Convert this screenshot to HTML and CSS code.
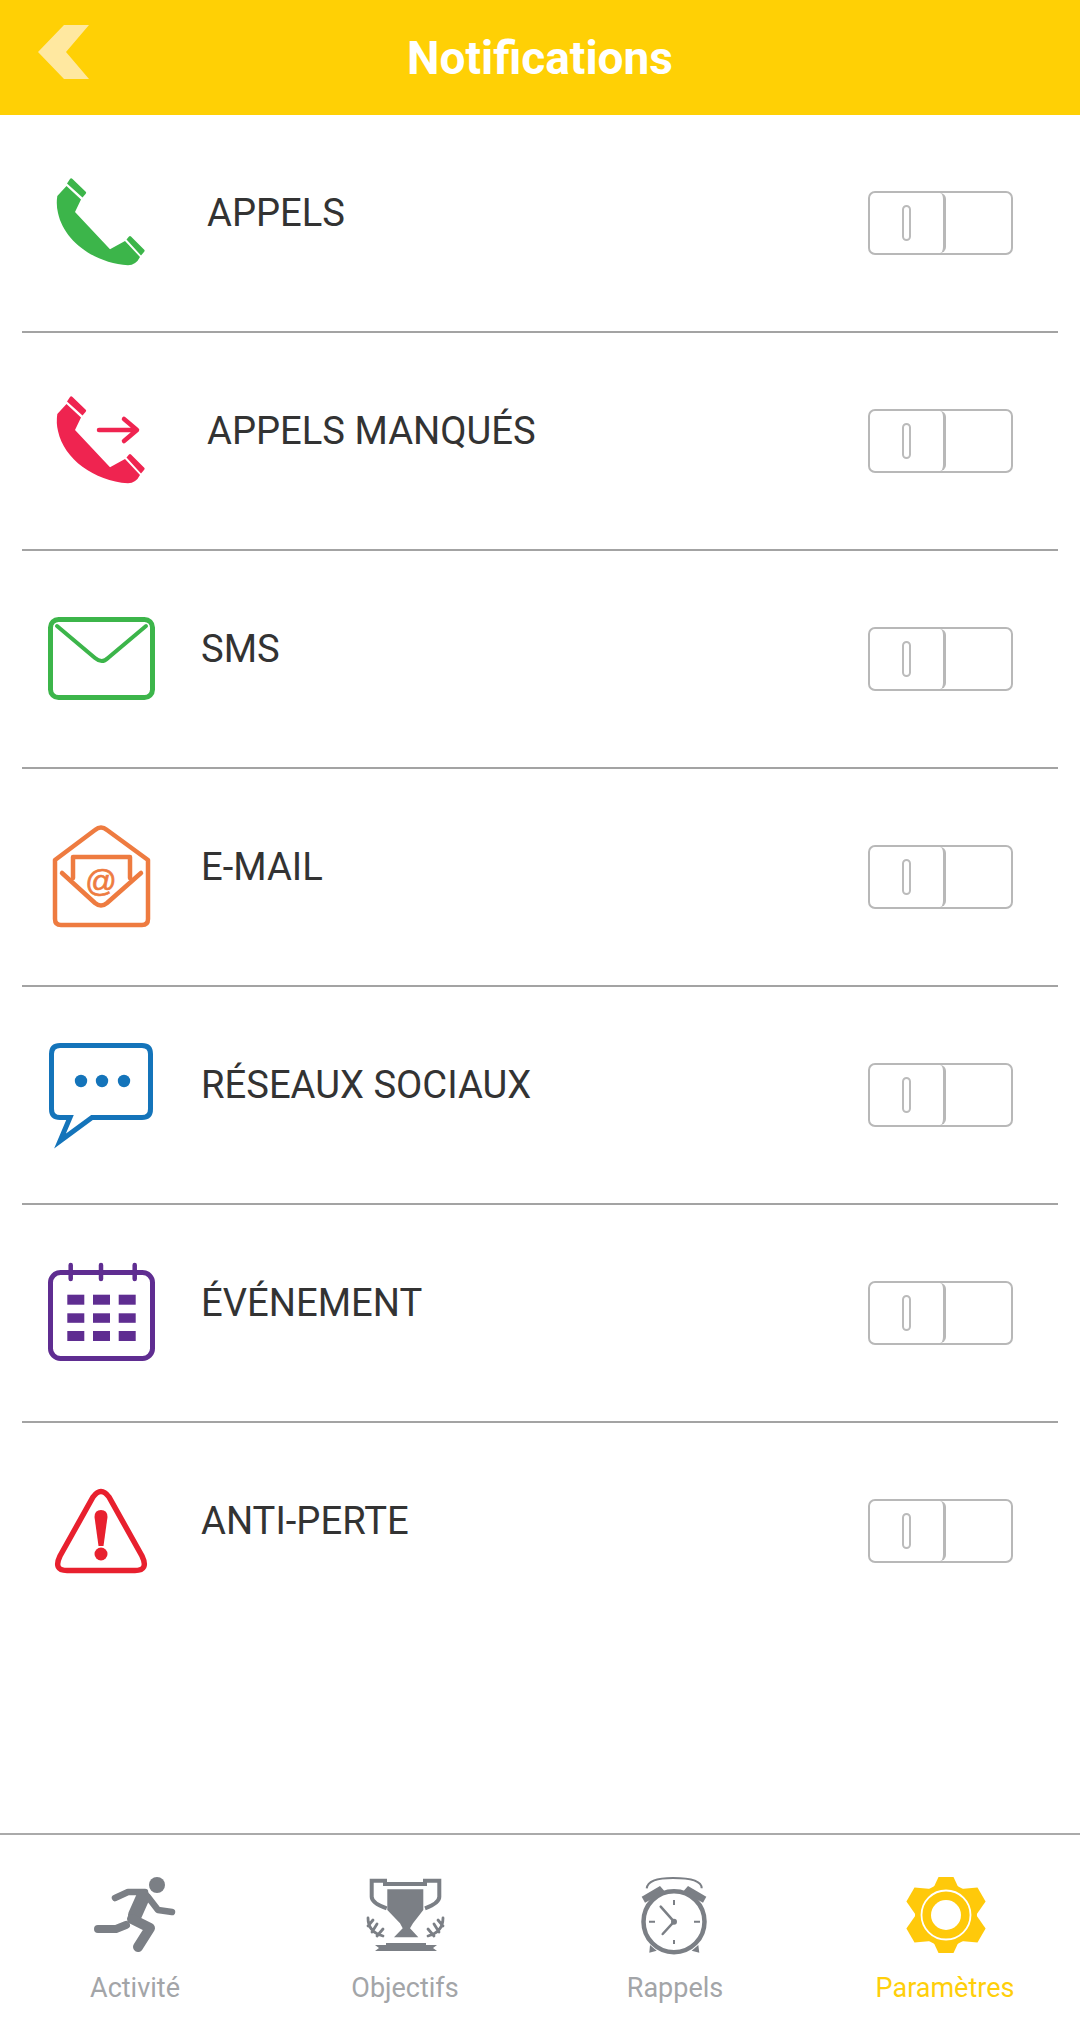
FILE: index.html
```html
<!DOCTYPE html>
<html lang="fr">
<head>
    <meta charset="UTF-8">
    <title>Notifications</title>
    <link rel="stylesheet" href="styles.css">
</head>
<body>

<div class="page">
    <header class="topbar">
        <svg class="back" width="60" height="60" viewBox="0 0 60 60">
            <polygon points="52,3 27,3 1,30 27,57 52,57 29,30" fill="#ffe8a0"/>
        </svg>
        <h1>Notifications</h1>
    </header>

    <main class="list">
        <div class="row">
            <svg class="icon phone-green" width="120" height="110" viewBox="0 0 120 110">
                <g fill="currentColor">
                    <path d="M26.500 17 L41 30.500 L35 43 L70 80.300 L85 72 L100 88 Q96 96 88 96.300 C54 94 24 72 18 44 Q16 36 17.300 27 Z"/>
                    <path d="M27 14.500 L30 10 Q31 8.500 32.500 10 L46 23 Q46.500 24 45.500 25 L42.500 28.500 Z"/>
                    <path d="M86.500 70.500 L89 67.500 Q90 66.500 91 67.500 L104.500 81 Q105 82 104 83 L101 86.500 Z"/>
                </g>
            </svg>
            <span class="label label-phone">APPELS</span>
            <div class="switch"><div class="knob"><span class="pill"></span></div></div>
        </div>

        <div class="row">
            <svg class="icon phone-red" width="120" height="110" viewBox="0 0 120 110">
                <g fill="currentColor">
                    <path d="M26.500 17 L41 30.500 L35 43 L70 80.300 L85 72 L100 88 Q96 96 88 96.300 C54 94 24 72 18 44 Q16 36 17.300 27 Z"/>
                    <path d="M27 14.500 L30 10 Q31 8.500 32.500 10 L46 23 Q46.500 24 45.500 25 L42.500 28.500 Z"/>
                    <path d="M86.500 70.500 L89 67.500 Q90 66.500 91 67.500 L104.500 81 Q105 82 104 83 L101 86.500 Z"/>
                </g>
                <path fill="none" stroke="currentColor" stroke-width="4.500" stroke-linecap="round" stroke-linejoin="round" d="M59 43 H96 M84 32 L97 43 L84 54"/>
            </svg>
            <span class="label label-phone">APPELS MANQUÉS</span>
            <div class="switch"><div class="knob"><span class="pill"></span></div></div>
        </div>

        <div class="row">
            <svg class="icon sms" width="120" height="110" viewBox="0 0 120 110">
                <rect x="10.500" y="14.500" width="102" height="78" rx="8" fill="none" stroke="currentColor" stroke-width="5"/>
                <path fill="none" stroke="currentColor" stroke-width="4" stroke-linecap="round" d="M17 21 L55 53 Q62 59 68 53 L106 21"/>
            </svg>
            <span class="label">SMS</span>
            <div class="switch"><div class="knob"><span class="pill"></span></div></div>
        </div>

        <div class="row">
            <svg class="icon email" width="120" height="110" viewBox="0 0 120 110">
                <g fill="none" stroke="currentColor" stroke-width="4.500" stroke-linecap="round" stroke-linejoin="round">
                    <path d="M55 7 Q61 2 67 7 L108 37 V96 Q108 102 102 102 H21 Q15 102 15 96 V37 Z"/>
                    <path d="M33 55 V34 H90 V55"/>
                    <path d="M22 50 L55 80 Q61 85 67 80 L101 50"/>
                </g>
                <text x="61" y="69" class="at">@</text>
            </svg>
            <span class="label">E-MAIL</span>
            <div class="switch"><div class="knob"><span class="pill"></span></div></div>
        </div>

        <div class="row">
            <svg class="icon social" width="120" height="110" viewBox="0 0 120 110">
                <path fill="none" stroke="currentColor" stroke-width="5" stroke-linejoin="miter" d="M20 4.500 H102 Q110.500 4.500 110.500 13 V68 Q110.500 76.500 102 76.500 H52 L20 100 L30 76.500 H20 Q11.500 76.500 11.500 68 V13 Q11.500 4.500 20 4.500 Z"/>
                <circle cx="41" cy="40" r="6.200" fill="currentColor"/>
                <circle cx="62" cy="40" r="6.200" fill="currentColor"/>
                <circle cx="84" cy="40" r="6.200" fill="currentColor"/>
            </svg>
            <span class="label">RÉSEAUX SOCIAUX</span>
            <div class="switch"><div class="knob"><span class="pill"></span></div></div>
        </div>

        <div class="row">
            <svg class="icon event" width="120" height="110" viewBox="0 0 120 110">
                <rect x="10.500" y="13.500" width="102" height="86" rx="10" fill="none" stroke="currentColor" stroke-width="5"/>
                <path stroke="currentColor" stroke-width="4.500" stroke-linecap="round" d="M30.700 6 V20 M61 6 V20 M94.700 6 V20"/>
                <g fill="currentColor">
                    <rect x="27.300" y="35.700" width="17" height="10"/>
                    <rect x="53" y="35.700" width="17" height="10"/>
                    <rect x="78.700" y="35.700" width="17" height="10"/>
                    <rect x="27.300" y="54.300" width="17" height="9.500"/>
                    <rect x="53" y="54.300" width="17" height="9.500"/>
                    <rect x="78.700" y="54.300" width="17" height="9.500"/>
                    <rect x="27.300" y="72" width="17" height="10"/>
                    <rect x="53" y="72" width="17" height="10"/>
                    <rect x="78.700" y="72" width="17" height="10"/>
                </g>
            </svg>
            <span class="label">ÉVÉNEMENT</span>
            <div class="switch"><div class="knob"><span class="pill"></span></div></div>
        </div>

        <div class="row row-last">
            <svg class="icon alert" width="120" height="110" viewBox="0 0 120 110">
                <path fill="none" stroke="currentColor" stroke-width="5.500" d="M53 20 Q61 9 69 20 L102 79 Q109 93.500 95 93.500 H27 Q13 93.500 20 79 Z"/>
                <path fill="currentColor" d="M54.500 40 Q54.500 33 61 33 Q67.500 33 67.500 40 L63.500 69 H58.500 Z"/>
                <circle cx="61" cy="77" r="6.500" fill="currentColor"/>
            </svg>
            <span class="label">ANTI-PERTE</span>
            <div class="switch"><div class="knob"><span class="pill"></span></div></div>
        </div>
    </main>

    <nav class="tabs">
        <div class="tab">
            <svg width="100" height="90" viewBox="0 0 100 90">
                <circle cx="72" cy="13" r="8" fill="currentColor"/>
                <g fill="none" stroke="currentColor" stroke-linecap="round" stroke-linejoin="round">
                    <path stroke-width="6.500" d="M30 26 L43 20 H60"/>
                    <path stroke-width="14" d="M58 25 L50 43"/>
                    <path stroke-width="6.500" d="M63 25 L73 38 L87 40"/>
                    <path stroke-width="10" d="M47 47 L65 56 L53 75"/>
                    <path stroke-width="8" d="M13 57 H31 L41 53"/>
                </g>
            </svg>
            <span class="tab-name">Activité</span>
        </div>
        <div class="tab">
            <svg width="100" height="90" viewBox="0 0 100 90">
                <path fill="none" stroke="currentColor" stroke-width="4" d="M31.700 36.300 Q16.700 31 16.700 24.700 V8.700 H30 V12 H70 V8.700 H84.300 V24.700 Q84.300 31 70 36.300"/>
                <polygon fill="currentColor" points="32.300,17.300 68.300,17.300 68.300,38 58,51.300 55,56.300 63.300,65.300 39,65.300 47.700,56.300 45,51.300 32.300,38"/>
                <g fill="none" stroke="currentColor" stroke-width="2.800" stroke-linecap="round">
                    <path d="M13 46 Q13 60 28 64 M13 54 L18 48 M17 60 L22 52 M22 64 L28 57"/>
                    <path d="M88 46 Q88 60 73 64 M88 54 L83 48 M84 60 L79 52 M79 64 L73 57"/>
                </g>
                <polygon fill="currentColor" points="20,73 31,73 31,71 71,71 71,73 82,73 78,76 82,79 20,79 24,76"/>
            </svg>
            <span class="tab-name">Objectifs</span>
        </div>
        <div class="tab">
            <svg width="100" height="90" viewBox="0 0 100 90">
                <path fill="none" stroke="currentColor" stroke-width="2" d="M21.700 16.300 Q23 6 48 6 Q76.700 6 76.700 16.300"/>
                <polygon fill="currentColor" points="16.700,24.700 35,14 40,19.700 20,30.700"/>
                <polygon fill="currentColor" points="81.300,24.700 63,14 58,19.700 78,30.700"/>
                <circle cx="49" cy="49.700" r="30.500" fill="none" stroke="currentColor" stroke-width="4.500"/>
                <path fill="none" stroke="currentColor" stroke-width="2.500" stroke-linecap="round" stroke-linejoin="round" d="M35.700 34.700 L49 49.700 L37.700 62"/>
                <path stroke="currentColor" stroke-width="2" d="M49 28 V33 M49 68 V72 M24 49.700 H30 M69 49.700 H75"/>
                <circle cx="49" cy="49.700" r="3" fill="currentColor"/>
                <polygon fill="currentColor" points="25,73 24.300,80.700 31.700,78.700"/>
                <polygon fill="currentColor" points="73.300,73 74.300,80.700 66.700,78.700"/>
            </svg>
            <span class="tab-name">Rappels</span>
        </div>
        <div class="tab tab-active">
            <svg width="100" height="90" viewBox="0 0 100 90">
                <g fill="currentColor" transform="translate(51 43)">
                    <circle r="31"/>
                    <polygon points="-7.500,-38 7.500,-38 14,-24 -14,-24"/>
                    <polygon points="-7.500,-38 7.500,-38 14,-24 -14,-24" transform="rotate(60) scale(1.080)"/>
                    <polygon points="-7.500,-38 7.500,-38 14,-24 -14,-24" transform="rotate(120) scale(1.080)"/>
                    <polygon points="-7.500,-38 7.500,-38 14,-24 -14,-24" transform="rotate(180)"/>
                    <polygon points="-7.500,-38 7.500,-38 14,-24 -14,-24" transform="rotate(240) scale(1.080)"/>
                    <polygon points="-7.500,-38 7.500,-38 14,-24 -14,-24" transform="rotate(300) scale(1.080)"/>
                </g>
                <circle cx="51" cy="43" r="24.500" fill="none" stroke="#fff" stroke-width="1.800"/>
                <circle cx="51" cy="43" r="15" fill="#fff"/>
            </svg>
            <span class="tab-name">Paramètres</span>
        </div>
    </nav>
</div>

</body>
</html>
```
FILE: styles.css
```css
body {
    margin: 0;
    font-family: Roboto, 'Liberation Sans', sans-serif;
    background-color: #fff;
    color: #333;
}

.page {
    display: flex;
    flex-direction: column;
    height: 100vh;
    overflow: hidden;
}

/* Top bar */
.topbar {
    display: grid;
    grid-template-columns: 1fr auto 1fr;
    align-items: start;
    height: 115px;
    flex-shrink: 0;
    background-color: #ffd005;
}

.back {
    margin: 22px 0 0 37px;
}

.topbar h1 {
    margin: 33px 0 0;
    font-size: 46px;
    line-height: 50px;
    font-weight: 700;
    color: #fff;
}

/* Rows */
.list {
    flex: 1;
}

.row {
    display: flex;
    align-items: center;
    box-sizing: border-box;
    height: 218px;
    margin: 0 22px;
    padding: 2px 45px 0 18px;
    border-bottom: 2px solid #a3a3a3;
}

.row-last {
    border-bottom-color: transparent;
}

.label {
    flex: 1;
    margin: 0 0 22px 41px;
    font-size: 38.2px;
    line-height: 44px;
    color: #333;
}

.label-phone {
    margin-left: 47px;
}

.phone-green { color: #3cb54a; }
.phone-red { color: #ef2450; }
.sms { color: #3cb54a; }
.email { color: #ee7b40; }
.social { color: #1474ba; }
.event { color: #5f2d91; }
.alert { color: #e8202e; }

.at {
    font-size: 31px;
    font-family: 'Liberation Sans', sans-serif;
    text-anchor: middle;
    fill: currentColor;
    stroke: currentColor;
    stroke-width: 0.7px;
}

/* Switch */
.switch {
    box-sizing: border-box;
    width: 145px;
    height: 64px;
    margin-bottom: 2px;
    border: 2px solid #b8b8b8;
    border-radius: 7px;
}

.knob {
    display: flex;
    justify-content: center;
    align-items: center;
    box-sizing: border-box;
    width: 76px;
    height: 100%;
    border-right: 3px solid #b8b8b8;
    border-radius: 6px;
}

.pill {
    box-sizing: border-box;
    width: 9px;
    height: 36px;
    border: 2px solid #bbb;
    border-radius: 5px;
}

/* Bottom tabs */
.tabs {
    display: grid;
    grid-template-columns: repeat(4, 1fr);
    height: 188px;
    flex-shrink: 0;
    box-sizing: border-box;
    border-top: 2px solid #aaa;
    padding-top: 37px;
}

.tab {
    display: flex;
    flex-direction: column;
    align-items: center;
    color: #7b7f85;
}

.tab-name {
    margin-top: 9px;
    font-size: 27px;
    line-height: 34px;
    color: #a3a5a8;
}

.tab-active {
    color: #ffc90a;
}

.tab-active .tab-name {
    color: #ffcf0a;
}
```
